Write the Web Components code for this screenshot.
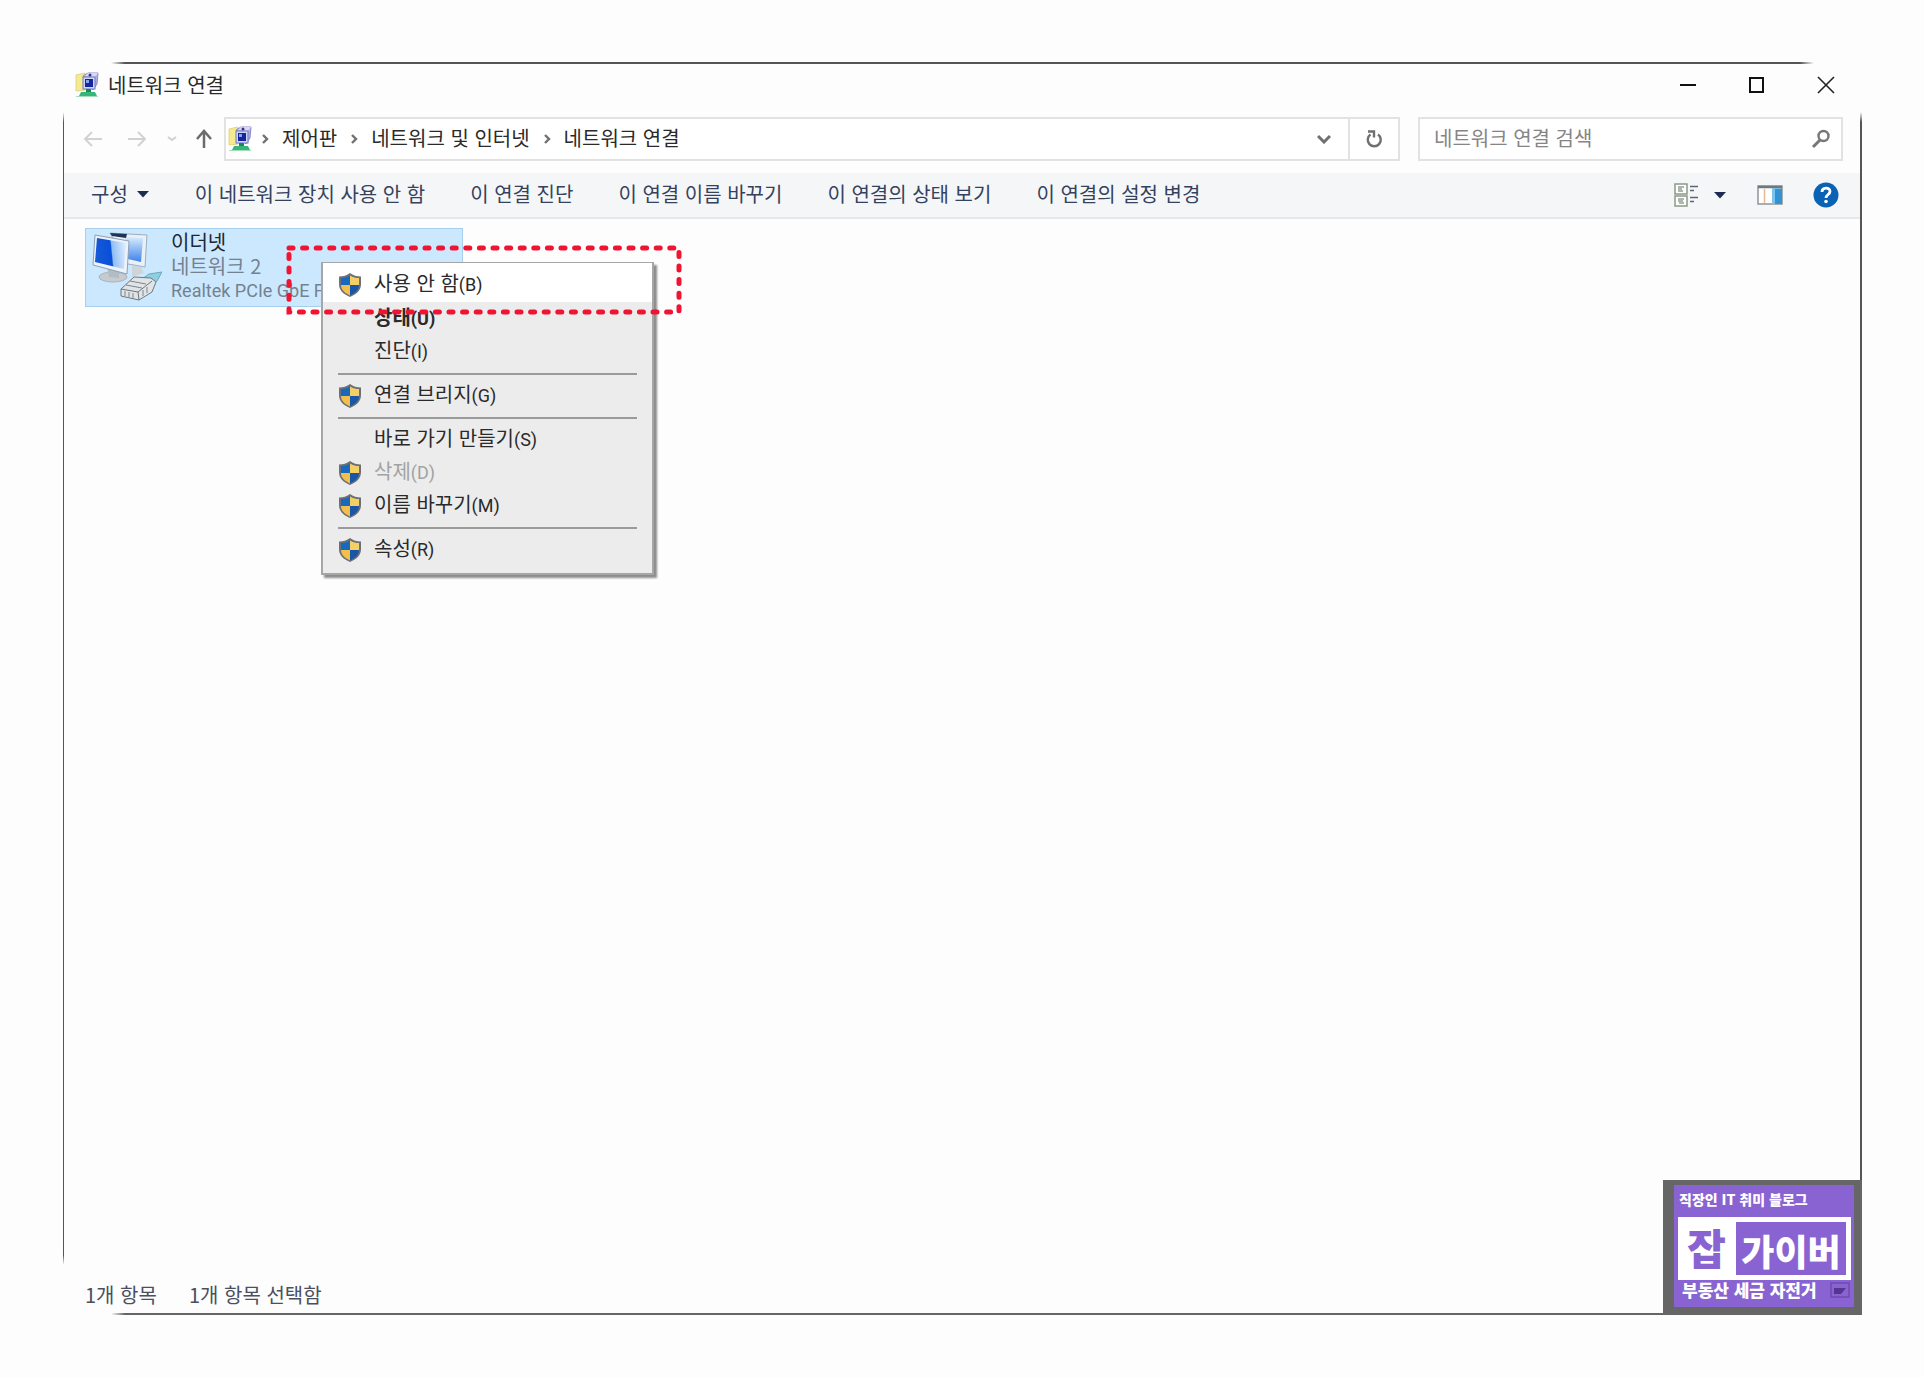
<!DOCTYPE html>
<html lang="ko">
<head>
<meta charset="utf-8">
<title>네트워크 연결</title>
<style>
  html, body { margin: 0; }
  body {
    background: #fdfdfd;
    color: #2a2a2a;
    font: 20px/24px "Noto Sans CJK KR", "Noto Sans", sans-serif;
  }
</style>
</head>
<body>
<net-window></net-window>

<script>
const reset = `
  * { box-sizing: border-box; }
  button, input { font: inherit; color: inherit; background: none; border: 0; padding: 0; margin: 0; border-radius: 0; }
  button { display: flex; align-items: center; justify-content: center; }
  svg { display: block; flex: none; }
`;

function define(name, css, html) {
  const template = document.createElement('template');
  template.innerHTML = `<style>${reset}${css}</style>${html}`;
  customElements.define(name, class extends HTMLElement {
    constructor() {
      super();
      this.attachShadow({ mode: 'open' }).append(template.content.cloneNode(true));
    }
  });
}

const icons = {
  network: ['0 0 24 26', `
    <path d="M1 3l9-2v17l-9 1z" fill="#f5ea8e" stroke="#e0d68a"/>
    <path d="M8 4l5-3h10l-1 11-4 6z" fill="#b3b1e0" stroke="#8b8ac4"/>
    <path d="M13 1h10l-3 4-10-1z" fill="#d9d8f2"/>
    <rect x="8" y="5" width="12" height="12" fill="#cdd6f6" stroke="#7076c4"/>
    <rect x="10" y="7" width="8" height="8" fill="#16259c"/>
    <path d="M11 8h3v3h-3z" fill="#86a4f2"/>
    <circle cx="15" cy="3" r="1.500" fill="#34348c"/>
    <path d="M11 17h5v4h-5z" fill="#178a58"/>
    <path d="M6 20h14l2 4H4z" fill="#35b77c"/><path d="M1 24.500h22" stroke="#a5dcb9"/>`],
  shield: ['0 0 24 26', `
    <path d="M12 1C9 3.500 5 4.500 1 4.500V12c0 6 4 10 11 13 7-3 11-7 11-13V4.500C19 4.500 15 3.500 12 1z" fill="#6b7078"/>
    <path d="M12 3.500C9 5.500 6 6 3 6v7h9z" fill="#1769bf"/>
    <path d="M12 3.500C15 5.500 18 6 21 6v7h-9z" fill="#f4cf63"/>
    <path d="M3 13c0 5 4 8 9 10.500V13z" fill="#f2c04a"/>
    <path d="M21 13c0 5-4 8-9 10.500V13z" fill="#1a56a8"/>`],
  back: ['0 0 20 18', `<path d="M19 9H2M9 2L2 9l7 7" fill="none" stroke="#d2d2d2" stroke-width="2"/>`],
  forward: ['0 0 20 18', `<path d="M1 9h17M11 2l7 7-7 7" fill="none" stroke="#d2d2d2" stroke-width="2"/>`],
  recent: ['0 0 10 6', `<path d="M1 1l4 3 4-3" fill="none" stroke="#d0d0d0" stroke-width="2"/>`],
  up: ['0 0 18 20', `<path d="M9 19V3M2 10l7-8 7 8" fill="none" stroke="#6b6b6b" stroke-width="2.500"/>`],
  crumb: ['0 0 8 12', `<path d="M2 2l4 4-4 4" fill="none" stroke="#707070" stroke-width="2.400"/>`],
  down: ['0 0 14 10', `<path d="M1 2l6 6 6-6" fill="none" stroke="#707070" stroke-width="3"/>`],
  refresh: ['0 0 18 18', `<path d="M13 4.500a6.500 6.500 0 1 1-7.500 0" fill="none" stroke="#707070" stroke-width="2.400"/><path d="M3 1.500h6v6" fill="none" stroke="#707070" stroke-width="2.400"/>`],
  search: ['0 0 20 20', `<circle cx="12.500" cy="7" r="5" fill="none" stroke="#777" stroke-width="2.400"/><path d="M9 11l-7 7" stroke="#777" stroke-width="3"/>`],
  caret: ['0 0 14 8', `<path d="M1 1h12L7 7.500z" fill="#1c2c50"/>`],
  view: ['0 0 26 24', `
    <path d="M1 1h12v10H1zM1 13h12v10H1z" fill="#fff" stroke="#8b9a87" stroke-width="1.500"/>
    <path d="M4 4h6M4 6h4M4 8h5M4 16h6M4 18h5M5 20h5" stroke="#5f6a66"/>
    <path d="M16 3.500h8M16 7.500h4M16 14.500h8M16 18.500h4" stroke="#5c6678" stroke-width="1.500"/>`],
  pane: ['0 0 26 20', `
    <rect x="1" y="1" width="24" height="18" fill="#fff" stroke="#8f959c" stroke-width="1.500"/>
    <path d="M1 2h24" stroke="#6d7884" stroke-width="2.500"/><path d="M7.500 4v14" stroke="#e5b98d" stroke-width="1.500"/>
    <path d="M15 3.500h10V19H15z" fill="#3192d4"/><path d="M15 3.500h3V19h-3z" fill="#79c3ec"/>`],
  help: ['0 0 26 26', `<circle cx="13" cy="13" r="12.500" fill="#0a62b5"/>
    <path d="M9 10c0-5 8-5 8-.500 0 3-4 3-4 6.500" fill="none" stroke="#fff" stroke-width="2.800"/><circle cx="13" cy="19.500" r="1.800" fill="#fff"/>`],
  min: ['0 0 18 18', `<path d="M1 9h16" stroke="#111" stroke-width="2"/>`],
  max: ['0 0 18 18', `<path d="M2 2h13v14H2z" fill="none" stroke="#111" stroke-width="2"/>`],
  close: ['0 0 18 18', `<path d="M1 1l16 16M17 1L1 17" stroke="#222" stroke-width="1.600"/>`],
  ethernet: ['0 0 72 70', `
    <defs>
      <linearGradient id="s" x1="0" y1="0.100" x2="1" y2="0"><stop offset="0" stop-color="#1558d8"/><stop offset=".48" stop-color="#0a4fd8"/><stop offset=".52" stop-color="#8fbdf6"/><stop offset="1" stop-color="#e2f1fe"/></linearGradient>
      <linearGradient id="r" x1="0" y1="0" x2="0" y2="1"><stop offset="0" stop-color="#d6ecfd"/><stop offset="1" stop-color="#3f82e8"/></linearGradient>
    </defs>
    <path d="M42 34l9 1 3 6-12 4z" fill="#cfd4d8"/>
    <path d="M20 1l37 2-2 32-17-3z" fill="#e9f0f6" stroke="#9aaec0"/>
    <path d="M35 5l18 1-2 24-13-3z" fill="url(#r)"/><path d="M20 1l17 1-1 4-14-2z" fill="#1f3357"/>
    <ellipse cx="23" cy="45" rx="14" ry="5" fill="#c6cbd0" stroke="#a9b2ba"/><path d="M17 35l12 3v8l-10-1z" fill="#b3bbc3"/>
    <path d="M5 3l34 6-2 33L3 33z" fill="#edf3f8" stroke="#8ba1b8"/>
    <path d="M7 6l29 5-2 26L5 30z" fill="url(#s)"/>
    <path d="M52 47l7-5 13-2-5 9-9 5z" fill="#8fd0e0" stroke="#6aaabb"/>
    <path d="M31 57l13-12 17 1 5 4-4 10-13 8-18-4z" fill="#e1e4e6" stroke="#6f7980"/>
    <path d="M31 57l17 3 14-11M48 60l1 8" fill="none" stroke="#6c757c"/>
    <path d="M36 53l16 3M40 49l16 3M35 59v5M39 60v5M43 61v5M53 58v6M57 55v6" fill="none" stroke="#7b858c"/>`],
};

customElements.define('nc-icon', class extends HTMLElement {
  constructor() { super(); this.attachShadow({ mode: 'open' }); }
  connectedCallback() {
    const [box, art] = icons[this.getAttribute('name')];
    const [, , w, h] = box.split(' ');
    this.shadowRoot.innerHTML = `<style>:host{display:block;flex:none}svg{display:block}</style>
      <svg viewBox="${box}" width="${w}" height="${h}" aria-hidden="true">${art}</svg>`;
  }
});

define('title-bar', `
  :host { display: flex; align-items: center; height: 44px; padding: 0 27px 0 12px; }
  h1 { flex: 1; margin: 0 0 0 9px; font: inherit; }
  .controls { display: flex; gap: 51px; }
`, `
  <nc-icon name="network"></nc-icon><h1><slot></slot></h1>
  <div class="controls">
    <button aria-label="최소화"><nc-icon name="min"></nc-icon></button>
    <button aria-label="최대화"><nc-icon name="max"></nc-icon></button>
    <button aria-label="닫기"><nc-icon name="close"></nc-icon></button>
  </div>`);

define('nav-bar', `
  :host { display: flex; align-items: center; padding: 10px 19px 12px 20px; }
  .history { display: flex; align-items: center; gap: 24px; width: 141px; }
  .history button:nth-child(3) { margin: 0 -6px 0 -4px; }
  .address { flex: 1; display: flex; height: 44px; border: 2px solid #e2e2e2; background: #fff; }
  nav { flex: 1; display: flex; align-items: center; gap: 13px; padding-left: 2px; }
  nav button { padding-bottom: 2px; }
  nav nc-icon:first-child { margin-right: -4px; }
  .address > button { width: 48px; }
  .address > button:last-child { width: 50px; border-left: 2px solid #e2e2e2; }
  form { display: flex; align-items: center; width: 425px; height: 44px; margin-left: 18px; padding: 0 10px 0 14px; border: 2px solid #e2e2e2; background: #fff; }
  input { flex: 1; min-width: 0; padding-bottom: 2px; outline: 0; }
  input::placeholder { color: #858585; opacity: 1; }
`, `
  <div class="history">
    <button aria-label="뒤로"><nc-icon name="back"></nc-icon></button>
    <button aria-label="앞으로"><nc-icon name="forward"></nc-icon></button>
    <button aria-label="최근 위치"><nc-icon name="recent"></nc-icon></button>
    <button aria-label="위로"><nc-icon name="up"></nc-icon></button>
  </div>
  <div class="address">
    <nav>
      <nc-icon name="network"></nc-icon>
      <nc-icon name="crumb"></nc-icon><button>제어판</button>
      <nc-icon name="crumb"></nc-icon><button>네트워크 및 인터넷</button>
      <nc-icon name="crumb"></nc-icon><button>네트워크 연결</button>
    </nav>
    <button aria-label="이전 위치"><nc-icon name="down"></nc-icon></button>
    <button aria-label="새로 고침"><nc-icon name="refresh"></nc-icon></button>
  </div>
  <form role="search">
    <input type="text" aria-label="네트워크 연결 검색" placeholder="네트워크 연결 검색">
    <button type="button" aria-label="검색"><nc-icon name="search"></nc-icon></button>
  </form>`);

define('tool-bar', `
  :host { display: flex; align-items: center; justify-content: space-between; height: 46px; padding: 0 21px 0 27px; background: #f5f6f7; border-bottom: 2px solid #e6e7e8; color: #34425e; }
  div { display: flex; align-items: center; }
  .commands { gap: 45px; padding-bottom: 2px; }
  .commands button { gap: 8px; }
  .tools { gap: 30px; }
  .tools button { gap: 13px; }
`, `
  <div class="commands">
    <button>구성 <nc-icon name="caret"></nc-icon></button>
    <button>이 네트워크 장치 사용 안 함</button>
    <button>이 연결 진단</button>
    <button>이 연결 이름 바꾸기</button>
    <button>이 연결의 상태 보기</button>
    <button>이 연결의 설정 변경</button>
  </div>
  <div class="tools">
    <button aria-label="보기 변경"><nc-icon name="view"></nc-icon><nc-icon name="caret"></nc-icon></button>
    <button aria-label="미리 보기 창"><nc-icon name="pane"></nc-icon></button>
    <button aria-label="도움말"><nc-icon name="help"></nc-icon></button>
  </div>`);

define('connection-item', `
  :host { display: flex; gap: 9px; width: 378px; height: 79px; padding: 1px 0 0 4px; background: #cce8ff; border: 1px solid #a6cfee; }
  nc-icon { margin-top: 2px; }
  .text { display: flex; flex-direction: column; min-width: 0; white-space: nowrap; color: #74828f; }
  ::slotted([slot=name]) { color: #1b2733; }
  ::slotted([slot=device]) { font: 18px/26px Roboto, "Noto Sans", sans-serif; }
`, `
  <nc-icon name="ethernet"></nc-icon>
  <div class="text"><slot name="name"></slot><slot name="network"></slot><slot name="device"></slot></div>`);

define('context-menu', `
  :host { display: block; width: 333px; padding-bottom: 7px; background: #ececec; border: 2px solid #a6a6a6; box-shadow: 3px 3px 2px #8c8c8c; border-top-width: 1px; }
  ::slotted(hr) { height: 2px; margin: 5px 15px 4px 15px; border: 0; background: #9a9a9a; }
`, `<div role="menu"><slot></slot></div>`);

define('menu-item', `
  :host { display: block; }
  button { width: 100%; height: 33px; justify-content: flex-start; gap: 12px; padding-left: 15px; text-align: left; }
  .icon { width: 24px; visibility: hidden; }
  .label { padding-bottom: 2px; }
  ::slotted(small) { font-size: 18px; font-family: Roboto, "Noto Sans", sans-serif; }
  :host([shield]) .icon { visibility: visible; }
  :host([strong]) button { font-weight: 700; }
  :host([off]) button { color: #a2a2a2; }
  :host([hot]) button { height: 39px; padding-top: 5px; background: #fff; }
`, `<button role="menuitem"><span class="icon"><nc-icon name="shield"></nc-icon></span><span class="label"><slot></slot></span></button>`);

define('status-bar', `
  :host { display: flex; gap: 32px; padding: 0 22px 8px; color: #4a5060; }
`, `<slot></slot>`);

define('dash-marker', `
  :host { display: block; pointer-events: none; }
  svg { width: 100%; height: 100%; overflow: visible; }
`, `<svg aria-hidden="true"><rect width="100%" height="100%" fill="none" stroke="#f01432" stroke-width="5" stroke-linecap="round" stroke-dasharray="4 9.600"/></svg>`);

define('blog-badge', `
  :host { display: flex; flex-direction: column; width: 199px; height: 135px; padding: 5px 8px 8px 11px; background: #666; color: #fff; font-weight: 900; white-space: nowrap; }
  .card { flex: 1; display: flex; flex-direction: column; padding: 3px 3px 0 4px; background: #8a63d2; }
  .top { font-size: 14px; height: 29px; padding-left: 1px; line-height: 22px; }
  .frame { display: flex; height: 63px; padding: 5px; background: #fff; }
  .a { width: 53px; padding-right: 6px; color: #8a63d2; font-size: 42px; line-height: 50px; text-align: center; }
  .b { flex: 1; background: #8a63d2; font-size: 36px; line-height: 56px; text-align: center; }
  .bottom { display: flex; align-items: center; gap: 13px; padding-left: 4px; font-size: 17px; line-height: 20px; }
`, `
  <div class="card">
    <div class="top">직장인 IT 취미 블로그</div>
    <div class="frame"><div class="a">잡</div><div class="b">가이버</div></div>
    <div class="bottom"><span>부동산 세금 자전거</span>
      <svg width="20" height="18" aria-hidden="true"><path d="M1 2h18v14H1z" fill="none" stroke="#7450b8" stroke-width="2"/><path d="M4 7h12l-5 6H4z" fill="#523690"/></svg>
    </div>
  </div>`);

define('net-window', `
  :host {
    position: relative; display: flex; flex-direction: column;
    min-height: calc(100vh - 125px); margin: 62px 62px 63px 63px; padding-top: 1px;
    background:
      linear-gradient(90deg, transparent, #555 14px calc(100% - 14px), transparent) 48px 0 / calc(100% - 96px) 2px no-repeat,
      linear-gradient(90deg, transparent, #666 14px) 100% 100% / calc(100% - 48px) 2px no-repeat,
      linear-gradient(transparent, #555 10px calc(100% - 10px), transparent) 0 50px / 1px calc(100% - 100px) no-repeat,
      linear-gradient(transparent, #555 10px) 100% 50px / 2px calc(100% - 50px) no-repeat,
      #fdfdfd;
  }
  tool-bar { margin: 0 2px 0 1px; }
  main { position: relative; flex: 1; padding: 9px 22px; }
  context-menu { position: absolute; left: 258px; top: 43px; }
  dash-marker { position: absolute; left: 226px; top: 29px; width: 390px; height: 64px; }
  blog-badge { position: absolute; right: 0; bottom: 0; }
`, `
  <title-bar>네트워크 연결</title-bar>
  <nav-bar></nav-bar>
  <tool-bar></tool-bar>
  <main>
    <connection-item>
      <span slot="name">이더넷</span><span slot="network">네트워크 2</span><span slot="device">Realtek PCIe GbE F</span>
    </connection-item>
    <context-menu>
      <menu-item shield hot>사용 안 함<small>(B)</small></menu-item>
      <menu-item strong>상태<small>(U)</small></menu-item>
      <menu-item>진단<small>(I)</small></menu-item>
      <hr>
      <menu-item shield>연결 브리지<small>(G)</small></menu-item>
      <hr>
      <menu-item>바로 가기 만들기<small>(S)</small></menu-item>
      <menu-item shield off>삭제<small>(D)</small></menu-item>
      <menu-item shield>이름 바꾸기<small>(M)</small></menu-item>
      <hr>
      <menu-item shield>속성<small>(R)</small></menu-item>
    </context-menu>
    <dash-marker></dash-marker>
  </main>
  <status-bar><span>1개 항목</span><span>1개 항목 선택함</span></status-bar>
  <blog-badge></blog-badge>`);
</script>
</body>
</html>
